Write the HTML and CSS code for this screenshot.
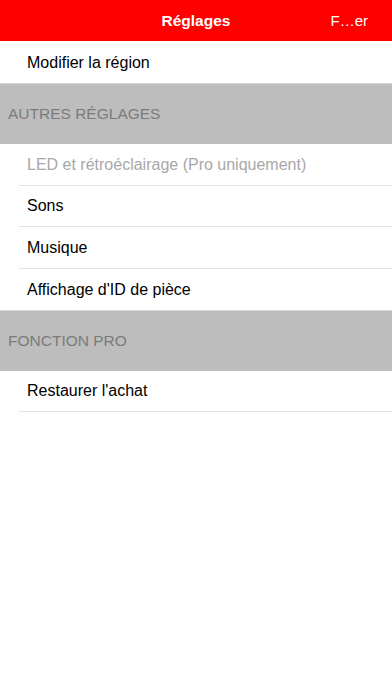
FILE: index.html
```html
<!DOCTYPE html>
<html lang="fr">
<head>
<meta charset="utf-8">
<title>Réglages</title>
<link rel="stylesheet" href="styles.css">
</head>
<body>
<header class="navbar">
  <span class="nav-side"></span>
  <h1 class="nav-title">Réglages</h1>
  <span class="nav-side nav-action">F…er</span>
</header>
<main class="settings">
  <ul class="group">
    <li class="row row-top">Modifier la région</li>
  </ul>
  <div class="section-head">AUTRES RÉGLAGES</div>
  <ul class="group">
    <li class="row row-disabled">LED et rétroéclairage (Pro uniquement)</li>
    <li class="row">Sons</li>
    <li class="row">Musique</li>
    <li class="row row-last">Affichage d'ID de pièce</li>
  </ul>
  <div class="section-head">FONCTION PRO</div>
  <ul class="group">
    <li class="row">Restaurer l'achat</li>
  </ul>
</main>
</body>
</html>
```

FILE: styles.css
```css
* { box-sizing: border-box; }
html, body {
  margin: 0;
  padding: 0;
  background: #ffffff;
  font-family: "Liberation Sans", Arial, sans-serif;
}
.navbar {
  height: 41px;
  background: #ff0000;
  display: grid;
  grid-template-columns: 1fr auto 1fr;
  align-items: center;
  color: #ffffff;
}
.nav-title {
  margin: 0;
  font-size: 15.5px;
  font-weight: bold;
  text-align: center;
}
.nav-action {
  justify-self: end;
  padding-right: 24px;
  font-size: 15px;
}
.settings {
  display: flex;
  flex-direction: column;
}
.group {
  list-style: none;
  margin: 0;
  padding: 0 0 0 19px;
}
.row {
  height: 41.5px;
  display: flex;
  align-items: center;
  padding-left: 8px;
  padding-top: 1px;
  font-size: 16px;
  color: #000000;
  border-bottom: 1px solid #e3e3e3;
}
.row-top {
  height: 42px;
  border-bottom: none;
}
.row-last {
  border-bottom: none;
  height: 41px;
}
.row-disabled {
  color: #a8a8a8;
}
.section-head {
  height: 61px;
  background: #bdbdbd;
  display: flex;
  align-items: center;
  padding-left: 8px;
  font-size: 15.5px;
  color: #7b7b7b;
  border-top: 1px solid #d6d6d6;
}
```
